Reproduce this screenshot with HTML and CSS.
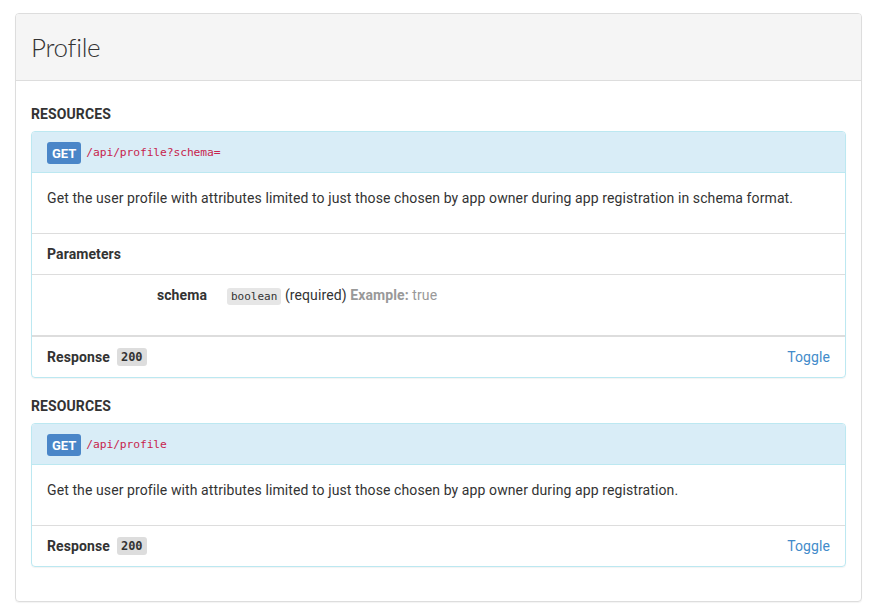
FILE: index.html
```html
<!DOCTYPE html>
<html>
<head>
<meta charset="utf-8">
<link rel="stylesheet" href="styles.css">
</head>
<body>
<div class="panel">
  <div class="panel-header"><h1 class="title">Profile</h1></div>
  <div class="panel-body">
    <h4 class="group-title">RESOURCES</h4>
    <div class="resource">
      <div class="res-heading"><span class="label-get">GET</span><code class="path">/api/profile?schema=</code></div>
      <div class="res-desc"><p>Get the user profile with attributes limited to just those chosen by app owner during app registration in schema format.</p></div>
      <div class="res-section"><strong>Parameters</strong></div>
      <div class="params">
        <dl class="param">
          <dt>schema</dt>
          <dd><code class="type">boolean</code> (required) <span class="example"><b>Example:</b> true</span></dd>
        </dl>
      </div>
      <div class="res-response"><span class="resp"><strong>Response</strong><code class="status">200</code></span><a class="toggle" href="#">Toggle</a></div>
    </div>
    <h4 class="group-title">RESOURCES</h4>
    <div class="resource last">
      <div class="res-heading"><span class="label-get">GET</span><code class="path">/api/profile</code></div>
      <div class="res-desc"><p>Get the user profile with attributes limited to just those chosen by app owner during app registration.</p></div>
      <div class="res-response"><span class="resp"><strong>Response</strong><code class="status">200</code></span><a class="toggle" href="#">Toggle</a></div>
    </div>
  </div>
</div>
</body>
</html>
```
FILE: styles.css
```css
* { box-sizing: border-box; }
body {
  margin: 0;
  padding: 13px 15px;
  font-family: Roboto, "Liberation Sans", sans-serif;
  font-size: 14px;
  line-height: 20px;
  letter-spacing: 0.1px;
  color: #333;
  background: #fff;
}
.panel {
  border: 1px solid #ddd;
  border-radius: 4px;
  box-shadow: 0 1px 1px rgba(0,0,0,0.05);
}
.panel-header {
  background: #f5f5f5;
  border-bottom: 1px solid #ddd;
  height: 67px;
  padding: 0 15px;
  display: flex;
  align-items: center;
  border-radius: 3px 3px 0 0;
}
.title {
  margin: 0;
  font-family: Lato, "Open Sans", sans-serif;
  font-weight: 300;
  font-size: 26px;
  line-height: 30px;
  letter-spacing: -0.3px;
  color: #333;
}
.panel-body {
  padding: 25px 15px 14px;
}
.group-title {
  margin: 0 0 9px;
  font-size: 14px;
  font-weight: 700;
  line-height: 16px;
  color: #333;
}
.resource {
  border: 1px solid #bce8f1;
  border-radius: 4px;
  margin-bottom: 20px;
  box-shadow: 0 1px 1px rgba(0,0,0,0.05);
}
.res-heading {
  background: #d9edf7;
  border-bottom: 1px solid #bce8f1;
  height: 41px;
  padding: 0 15px;
  display: flex;
  align-items: center;
  border-radius: 3px 3px 0 0;
}
.label-get {
  display: inline-block;
  background: #4a86c8;
  color: #fff;
  font-weight: 700;
  font-size: 13px;
  line-height: 14px;
  letter-spacing: 0;
  padding: 5px 5px 3px;
  border-radius: 3px;
  margin-right: 5px;
  position: relative;
  top: 1px;
}
.path {
  font-family: "DejaVu Sans Mono", "Liberation Mono", monospace;
  font-size: 11.3px;
  letter-spacing: -0.1px;
  color: #c7254e;
  position: relative;
  top: 1px;
}
.res-desc {
  padding: 15px 15px;
  border-bottom: 1px solid #ddd;
}
.res-desc p { margin: 0 0 10px; }
.res-section {
  padding: 10px 15px;
  border-bottom: 1px solid #ddd;
}
.params {
  padding: 10px 15px 30px;
  border-bottom: 2px solid #ddd;
}
.param {
  margin: 0;
  display: flex;
}
.param dt {
  width: 160px;
  text-align: right;
  font-weight: 700;
}
.param dd { margin: 0 0 0 20px; }
.type {
  font-family: "DejaVu Sans Mono", "Liberation Mono", monospace;
  font-size: 11px;
  line-height: 1;
  letter-spacing: 0;
  background: #e6e6e6;
  border-radius: 3px;
  padding: 2px 4px;
  color: #333;
}
.example { color: #999; }
.example b { font-weight: 700; }
.res-response {
  height: 40px;
  padding: 0 15px;
  display: flex;
  justify-content: space-between;
  align-items: center;
}
.resp {
  display: flex;
  align-items: center;
}
.status {
  display: inline-block;
  font-family: "DejaVu Sans Mono", "Liberation Mono", monospace;
  font-size: 12px;
  line-height: 14px;
  letter-spacing: 0;
  font-weight: 700;
  background: #ddd;
  border-radius: 3px;
  padding: 2px 4px;
  margin-left: 7px;
  color: #333;
}
.toggle {
  color: #428bca;
  text-decoration: none;
}
```
